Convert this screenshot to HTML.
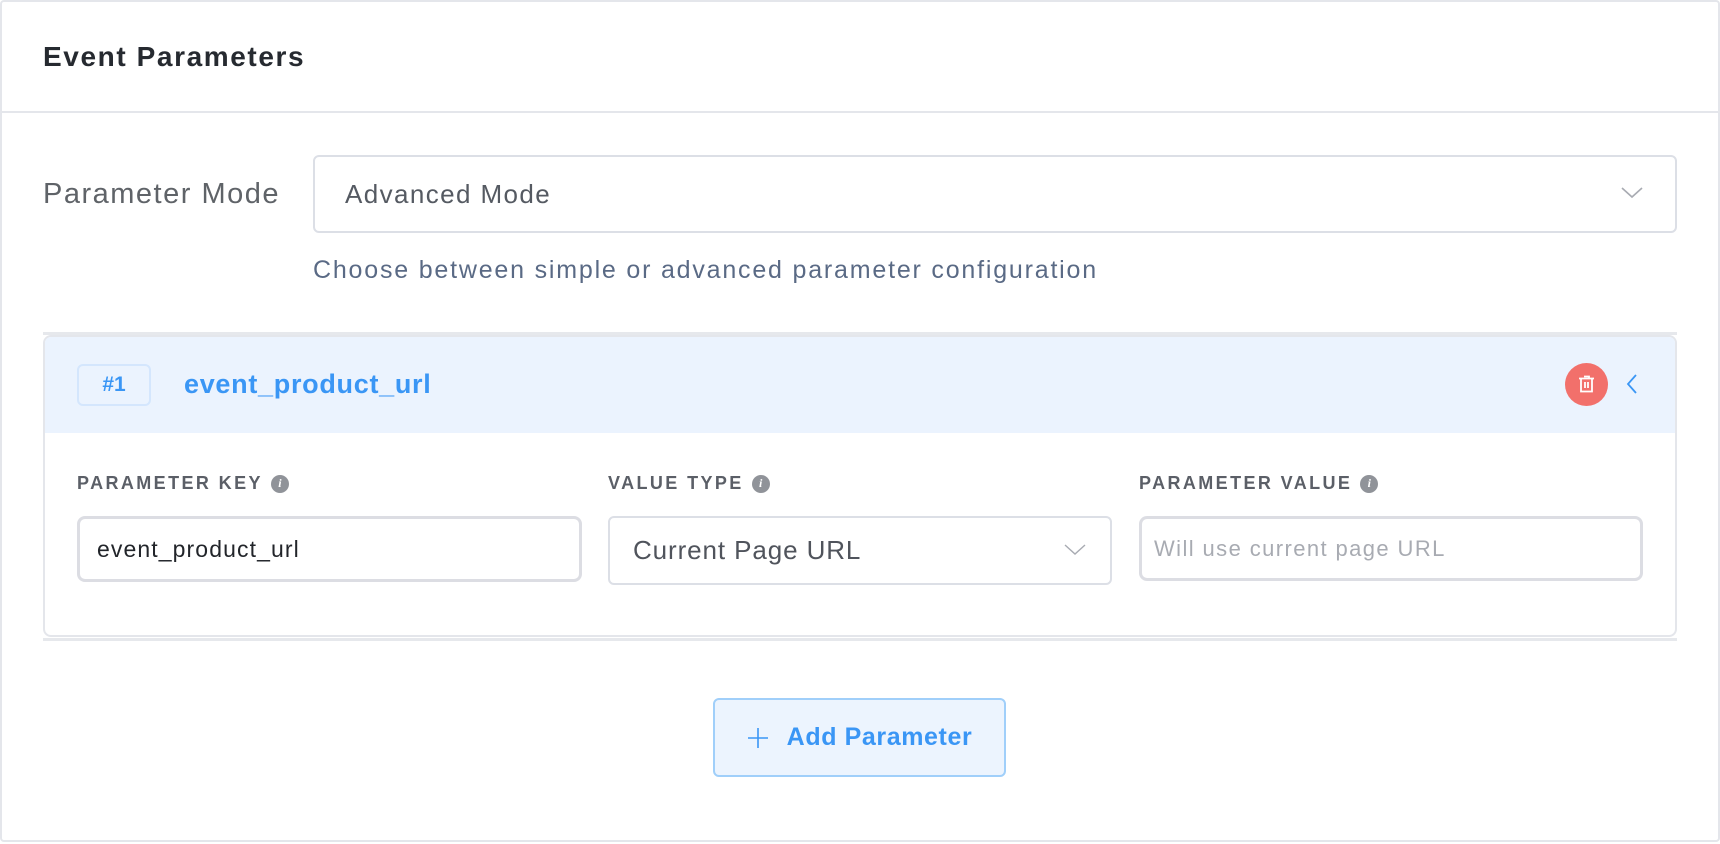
<!DOCTYPE html>
<html><head><meta charset="utf-8"><style>
*{box-sizing:border-box;margin:0;padding:0}
body{width:1720px;height:844px;background:#fff;font-family:"Liberation Sans",Arial,sans-serif;position:relative;overflow:hidden}
.a{position:absolute}
.card{left:0;top:0;width:1720px;height:842px;border:2px solid #e4e6eb;border-radius:4px}
.lbl{font-size:18px;letter-spacing:2.4px;color:#5b5f67;font-weight:bold;display:flex;align-items:center}
.info{width:18px;height:18px;border-radius:50%;background:#909399;color:#fff;font-size:12px;font-style:italic;font-weight:bold;display:inline-flex;align-items:center;justify-content:center;margin-left:8px;letter-spacing:0;font-family:"Liberation Serif",serif}
</style></head><body>
<div class="a card"></div>
<div class="a" style="left:0;top:111px;width:1720px;height:2px;background:#e4e6eb"></div>
<div class="a" style="left:43px;top:41px;font-size:28px;letter-spacing:1.6px;font-weight:bold;color:#262a30">Event Parameters</div>

<div class="a" style="left:43px;top:178px;font-size:29px;letter-spacing:1.5px;color:#5f6368">Parameter Mode</div>
<div class="a" style="left:313px;top:155px;width:1364px;height:78px;border:2px solid #dcdfe6;border-radius:6px"></div>
<div class="a" style="left:345px;top:179px;font-size:26px;letter-spacing:1.4px;color:#555a62">Advanced Mode</div>
<svg class="a" style="left:1620px;top:186px" width="24" height="14"><path d="M2 2 L12 11 L22 2" fill="none" stroke="#a8abb2" stroke-width="1.6"/></svg>
<div class="a" style="left:313px;top:256px;font-size:25px;letter-spacing:1.8px;color:#5a6a85">Choose between simple or advanced parameter configuration</div>

<div class="a" style="left:43px;top:332px;width:1634px;height:309px;border-top:3px solid #e6e8ec;border-bottom:3px solid #e6e8ec"></div>
<div class="a" style="left:43px;top:335px;width:1634px;height:302px;border:2px solid #e4e6eb;border-radius:8px;overflow:hidden">
 <div style="height:96px;background:#ebf3fe"></div>
</div>
<div class="a" style="left:77px;top:364px;width:74px;height:42px;border:2px solid #d4e6fd;border-radius:6px;color:#3a96f5;font-weight:bold;font-size:21px;display:flex;align-items:center;justify-content:center">#1</div>
<div class="a" style="left:184px;top:369px;font-size:27px;letter-spacing:0.7px;font-weight:bold;color:#3a96f5">event_product_url</div>
<div class="a" style="left:1565px;top:363px;width:43px;height:43px;border-radius:50%;background:#f2706b"></div>
<svg class="a" style="left:1575px;top:373px" width="23" height="23" viewBox="0 0 23 23"><path d="M9 3.5h5v2M4 5.5h15M6 5.5v13h11v-13M10 9v6M13 9v6" fill="none" stroke="#fff" stroke-width="1.8"/></svg>
<svg class="a" style="left:1625px;top:373px" width="14" height="22"><path d="M11 2 L3 11 L11 20" fill="none" stroke="#3a96f5" stroke-width="1.8"/></svg>

<div class="a lbl" style="left:77px;top:473px">PARAMETER KEY<span class="info">i</span></div>
<div class="a lbl" style="left:608px;top:473px">VALUE TYPE<span class="info">i</span></div>
<div class="a lbl" style="left:1139px;top:473px">PARAMETER VALUE<span class="info">i</span></div>

<div class="a" style="left:77px;top:516px;width:505px;height:66px;border:3px solid #dcdde3;border-radius:8px;padding-left:17px;display:flex;align-items:center;font-size:23px;letter-spacing:1.1px;color:#22252a">event_product_url</div>
<div class="a" style="left:608px;top:516px;width:504px;height:69px;border:2px solid #dcdfe6;border-radius:6px;padding-left:23px;display:flex;align-items:center;font-size:26px;letter-spacing:0.9px;color:#50545c">Current Page URL</div>
<svg class="a" style="left:1064px;top:544px" width="22" height="12"><path d="M1 1 L11 10 L21 1" fill="none" stroke="#a8abb2" stroke-width="1.4"/></svg>
<div class="a" style="left:1139px;top:516px;width:504px;height:65px;border:3px solid #dcdde3;border-radius:8px;padding-left:12px;display:flex;align-items:center;font-size:22px;letter-spacing:1.4px;color:#a8abb2">Will use current page URL</div>

<div class="a" style="left:713px;top:698px;width:293px;height:79px;border:2px solid #a0cffa;border-radius:6px;background:#ecf4fe;display:flex;align-items:center;justify-content:center;gap:18px;color:#3a96f5;font-weight:bold;font-size:25px;letter-spacing:0.6px">
<svg width="22" height="22"><path d="M11 1v20M1 11h20" stroke="#3a96f5" stroke-width="1.6"/></svg>Add Parameter</div>
</body></html>
